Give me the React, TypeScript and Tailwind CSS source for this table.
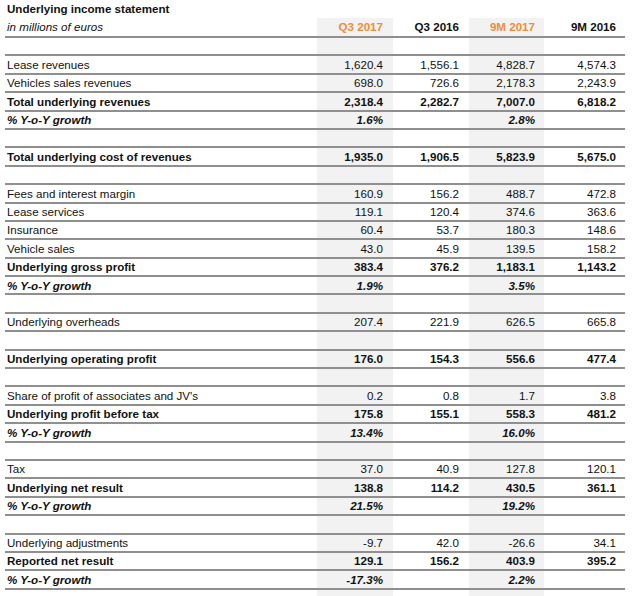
type Row = {
  label?: string;
  values?: string[];
  kind?: "normal" | "bold" | "growth";
};

const rows: Row[] = [
  {},
  { label: "Lease revenues", values: ["1,620.4", "1,556.1", "4,828.7", "4,574.3"] },
  { label: "Vehicles sales revenues", values: ["698.0", "726.6", "2,178.3", "2,243.9"] },
  { label: "Total underlying revenues", values: ["2,318.4", "2,282.7", "7,007.0", "6,818.2"], kind: "bold" },
  { label: "% Y-o-Y growth", values: ["1.6%", "", "2.8%", ""], kind: "growth" },
  {},
  { label: "Total underlying cost of revenues", values: ["1,935.0", "1,906.5", "5,823.9", "5,675.0"], kind: "bold" },
  {},
  { label: "Fees and interest margin", values: ["160.9", "156.2", "488.7", "472.8"] },
  { label: "Lease services", values: ["119.1", "120.4", "374.6", "363.6"] },
  { label: "Insurance", values: ["60.4", "53.7", "180.3", "148.6"] },
  { label: "Vehicle sales", values: ["43.0", "45.9", "139.5", "158.2"] },
  { label: "Underlying gross profit", values: ["383.4", "376.2", "1,183.1", "1,143.2"], kind: "bold" },
  { label: "% Y-o-Y growth", values: ["1.9%", "", "3.5%", ""], kind: "growth" },
  {},
  { label: "Underlying overheads", values: ["207.4", "221.9", "626.5", "665.8"] },
  {},
  { label: "Underlying operating profit", values: ["176.0", "154.3", "556.6", "477.4"], kind: "bold" },
  {},
  { label: "Share of profit of associates and JV's", values: ["0.2", "0.8", "1.7", "3.8"] },
  { label: "Underlying profit before tax", values: ["175.8", "155.1", "558.3", "481.2"], kind: "bold" },
  { label: "% Y-o-Y growth", values: ["13.4%", "", "16.0%", ""], kind: "growth" },
  {},
  { label: "Tax", values: ["37.0", "40.9", "127.8", "120.1"] },
  { label: "Underlying net result", values: ["138.8", "114.2", "430.5", "361.1"], kind: "bold" },
  { label: "% Y-o-Y growth", values: ["21.5%", "", "19.2%", ""], kind: "growth" },
  {},
  { label: "Underlying adjustments", values: ["-9.7", "42.0", "-26.6", "34.1"] },
  { label: "Reported net result", values: ["129.1", "156.2", "403.9", "395.2"], kind: "bold" },
  { label: "% Y-o-Y growth", values: ["-17.3%", "", "2.2%", ""], kind: "growth" },
];

// widths of the four number columns, the shaded ones are 1st and 3rd
const cols = [
  "w-[76px] bg-[#f2f2f2] pr-[10px]",
  "w-[76px] pr-[10px]",
  "w-[75px] bg-[#f2f2f2] pr-[9px]",
  "w-[81px] pr-[9px]",
];

const weight = (kind?: Row["kind"]) =>
  kind === "bold" ? "font-bold" : kind === "growth" ? "font-bold italic" : "";

const App = () => {
  return (
    <div className="w-[633px] h-[596px] overflow-hidden bg-white pl-[5px] text-[11.6px] text-[#111] font-['Liberation_Sans',Arial,sans-serif]">
      {/* Title */}
      <div className="h-[17.5px] pl-[2px] pt-[1px] text-[11.6px] font-bold leading-[15px]">
        Underlying income statement
      </div>

      {/* Column headers */}
      <div className="flex h-[18.5px] items-center font-bold">
        <div className="w-[312px] pl-[2px] font-normal italic">in millions of euros</div>
        <div className={`${cols[0]} flex h-full items-center justify-end text-[#f08c3a]`}>Q3 2017</div>
        <div className={`${cols[1]} flex h-full items-center justify-end`}>Q3 2016</div>
        <div className={`${cols[2]} flex h-full items-center justify-end text-[#f08c3a]`}>9M 2017</div>
        <div className={`${cols[3]} flex h-full items-center justify-end`}>9M 2016</div>
      </div>

      {/* Body rows */}
      {rows.map((row, i) => (
        <div key={i} className={`flex h-[18.4px] border-t-2 border-[#8f8f8f] w-[620px] ${weight(row.kind)}`}>
          <div className="w-[312px] pl-[2px] flex items-center">{row.label}</div>
          {cols.map((c, j) => (
            <div key={j} className={`${c} flex items-center justify-end`}>
              {row.values ? row.values[j] : ""}
            </div>
          ))}
        </div>
      ))}

      {/* Tail */}
      <div className="flex h-[20px] border-t-2 border-[#8f8f8f] w-[620px]">
        <div className="w-[312px]" />
        {cols.map((c, j) => (
          <div key={j} className={c} />
        ))}
      </div>
    </div>
  );
};

export default App;
